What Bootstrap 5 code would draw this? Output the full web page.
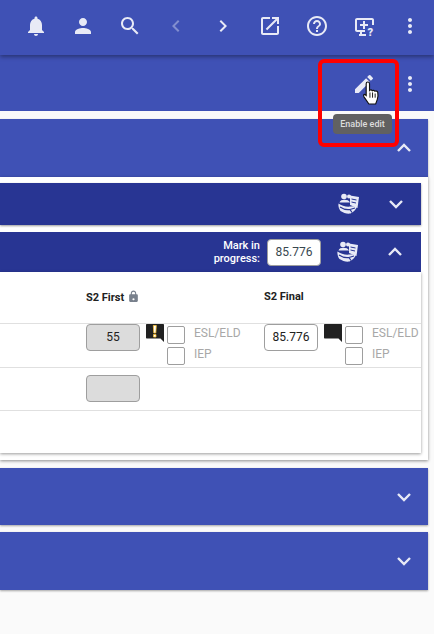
<!DOCTYPE html>
<html lang="en">
<head>
  <meta charset="UTF-8">
  <title>Marks</title>
  <link href="https://cdn.jsdelivr.net/npm/bootstrap@5.3.0/dist/css/bootstrap.min.css" rel="stylesheet">
  <style>
    html, body { height: 634px; overflow: hidden; }
    body { background: #fafafa; font-family: Roboto, "Liberation Sans", sans-serif; font-size: 12px; color: #212121; position: relative; }
    .top-bar { height: 55px; background: #3f51b5; box-shadow: 0 2px 4px rgba(0,0,0,.35); position: relative; z-index: 2; padding: 0 12px 3px 24px; }
    .top-btn { width: 24px; height: 24px; color: #e8eaf6; flex: none; }
    .top-btn svg { display: block; width: 24px; height: 24px; fill: currentColor; }
    .top-btn.off { opacity: .4; }
    .sub-bar { height: 56px; background: #3f51b5; padding: 2px 12px 0 0; }
    .panel-wrap { margin-top: 8px; width: 428px; }
    .panel-head { background: #3f51b5; color: #fff; padding-right: 14px; box-shadow: 0 1px 2px rgba(0,0,0,.35); }
    .chev { width: 20px; height: 20px; fill: none; stroke: #e8eaf6; stroke-width: 2.4; flex: none; }
    .outer-body { background: #fff; padding: 6px 7px 7px 0; box-shadow: 0 1px 3px rgba(0,0,0,.45); }
    .inner-head { background: #283593; color: #fff; height: 42px; padding-right: 15px; box-shadow: 0 1px 2px rgba(0,0,0,.4); }
    .inner-head.open { height: 40px; margin-top: 7px; box-shadow: none; padding-right: 16px; }
    .book-ico { width: 24px; height: 24px; flex: none; margin-right: 25px; }
    .mip-label { font-size: 11px; line-height: 13px; text-align: right; font-weight: 500; margin-right: 7px; }
    .mark-box { width: 54px; height: 27px; border: 1px solid #9e9e9e; border-radius: 4px; background: #fff; color: #37474f; font-size: 12px; text-align: center; line-height: 25px; margin-right: 15px; }
    .marks-card { background: #fff; box-shadow: 0 1px 3px rgba(0,0,0,.4); height: 181px; }
    .marks-row { padding-left: 86px; border-bottom: 1px solid #e0e0e0; }
    .row-head { height: 52px; padding-top: 17px; font-weight: 700; font-size: 11px; color: #212121; }
    .row-one { height: 44px; }
    .row-two { height: 43px; padding-top: 7px; }
    .row-last { height: 43px; border-bottom: 0; }
    .col-first { width: 178px; flex: none; }
    .lock-ico { width: 13px; height: 15px; vertical-align: -3px; }
    .mark-cell { width: 54px; height: 27px; border: 1px solid #9e9e9e; border-radius: 4px; background: #fff; font-size: 12px; line-height: 25px; text-align: center; flex: none; color: #212121; }
    .mark-cell.locked { background: #dcdcdc; }
    .note-ico { width: 20px; height: 20px; flex: none; margin-left: 6px; }
    .tick-box { width: 18px; height: 18px; border: 1px solid #9e9e9e; border-radius: 2px; background: #fff; display: block; flex: none; }
    .tick-col { margin-left: 1px; margin-top: 2px; gap: 3px; }
    .tick-txt { color: #a8a8a8; font-size: 12px; margin-left: 9px; line-height: 21px; margin-top: -1px; }
    .red-frame { position: absolute; left: 318px; top: 59px; width: 81px; height: 88px; border: 4px solid #f00; border-radius: 6px; z-index: 5; }
    .tip-box { position: absolute; left: 333px; top: 114px; width: 59px; height: 20px; background: #616161; color: #ddd; font-size: 9px; font-weight: 500; line-height: 20px; text-align: center; border-radius: 4px; z-index: 4; }
    .pen-ico { position: absolute; left: 352px; top: 72px; width: 24px; height: 24px; z-index: 3; }
    .hand-ico { position: absolute; left: 361px; top: 81px; width: 21px; height: 24px; z-index: 4; }
  </style>
</head>
<body>
  <div class="top-bar d-flex align-items-center justify-content-between">
    <span class="top-btn"><svg viewBox="0 0 24 24"><path d="M12 22c1.100 0 2-.9 2-2h-4c0 1.100.9 2 2 2zm6-6v-5c0-3.070-1.640-5.640-4.500-6.320V4c0-.83-.67-1.500-1.500-1.500s-1.500.67-1.500 1.500v.68C7.630 5.360 6 7.920 6 11v5l-2 2v1h16v-1l-2-2z"/></svg></span>
    <span class="top-btn"><svg viewBox="0 0 24 24"><path d="M12 12c2.210 0 4-1.790 4-4s-1.790-4-4-4-4 1.790-4 4 1.790 4 4 4zm0 2c-2.670 0-8 1.340-8 4v2h16v-2c0-2.660-5.330-4-8-4z"/></svg></span>
    <span class="top-btn"><svg viewBox="0 0 24 24"><path d="M15.500 14h-.79l-.28-.27C15.410 12.590 16 11.110 16 9.500 16 5.910 13.090 3 9.500 3S3 5.910 3 9.500 5.910 16 9.500 16c1.610 0 3.090-.59 4.230-1.570l.27.28v.79l5 4.990L20.490 19l-4.990-5zm-6 0C7.010 14 5 11.990 5 9.500S7.010 5 9.500 5 14 7.010 14 9.500 11.990 14 9.500 14z"/></svg></span>
    <span class="top-btn off"><svg viewBox="0 0 24 24"><path d="M15.410 7.410 14 6l-6 6 6 6 1.410-1.410L10.830 12z"/></svg></span>
    <span class="top-btn"><svg viewBox="0 0 24 24"><path d="M10 6 8.590 7.410 13.170 12l-4.580 4.590L10 18l6-6z"/></svg></span>
    <span class="top-btn"><svg viewBox="0 0 24 24"><path d="M19 19H5V5h7V3H5c-1.110 0-2 .9-2 2v14c0 1.100.89 2 2 2h14c1.100 0 2-.9 2-2v-7h-2v7zM14 3v2h3.590l-9.830 9.830 1.410 1.410L19 6.410V10h2V3h-7z"/></svg></span>
    <span class="top-btn"><svg viewBox="0 0 24 24"><path d="M11 18h2v-2h-2v2zm1-16C6.480 2 2 6.480 2 12s4.480 10 10 10 10-4.480 10-10S17.520 2 12 2zm0 18c-4.410 0-8-3.590-8-8s3.590-8 8-8 8 3.590 8 8-3.590 8-8 8zm0-14c-2.210 0-4 1.790-4 4h2c0-1.100.9-2 2-2s2 .9 2 2c0 2-3 1.750-3 5h2c0-2.250 3-2.500 3-5 0-2.210-1.790-4-4-4z"/></svg></span>
    <span class="top-btn"><svg viewBox="0 0 24 24"><path d="M6 4h15c1 0 2 .8 2 2v5h-2V6H6v10h8v2h-3v2h4v2H8v-2h1v-2H6c-1 0-2-.8-2-2V6c0-1.200 1-2 2-2zm6 3h2v3h3v2h-3v3h-2v-3H9v-2h3z"/><text x="16.500" y="21.500" font-size="11" font-weight="900" font-family="Roboto, sans-serif">?</text></svg></span>
    <span class="top-btn"><svg viewBox="0 0 24 24"><path d="M12 8c1.100 0 2-.9 2-2s-.9-2-2-2-2 .9-2 2 .9 2 2 2zm0 2c-1.100 0-2 .9-2 2s.9 2 2 2 2-.9 2-2-.9-2-2-2zm0 6c-1.100 0-2 .9-2 2s.9 2 2 2 2-.9 2-2-.9-2-2-2z"/></svg></span>
  </div>

  <div class="sub-bar d-flex align-items-center justify-content-end">
    <span class="top-btn"><svg viewBox="0 0 24 24"><path d="M12 8c1.100 0 2-.9 2-2s-.9-2-2-2-2 .9-2 2 .9 2 2 2zm0 2c-1.100 0-2 .9-2 2s.9 2 2 2 2-.9 2-2-.9-2-2-2zm0 6c-1.100 0-2 .9-2 2s.9 2 2 2 2-.9 2-2-.9-2-2-2z"/></svg></span>
  </div>

  <div class="panel-wrap">
    <div class="panel-head d-flex align-items-center justify-content-end" style="height:58px">
      <svg class="chev" viewBox="0 0 20 20"><path d="M4 13l6-6 6 6"/></svg>
    </div>
    <div class="outer-body">
      <div class="inner-head d-flex align-items-center justify-content-end">
        <svg class="book-ico" viewBox="0 0 24 24"><use href="#bookIco"/></svg>
        <svg class="chev" viewBox="0 0 20 20"><path d="M4 7l6 6 6-6"/></svg>
      </div>
      <div class="inner-head open d-flex align-items-center justify-content-end">
        <div class="mip-label">Mark in<br>progress:</div>
        <div class="mark-box">85.776</div>
        <svg class="book-ico" viewBox="0 0 24 24"><use href="#bookIco"/></svg>
        <svg class="chev" viewBox="0 0 20 20"><path d="M4 13l6-6 6 6"/></svg>
      </div>
      <div class="marks-card">
        <div class="marks-row row-head d-flex">
          <div class="col-first">S2 First
            <svg class="lock-ico" viewBox="0 0 24 24" fill="#78808c"><path d="M18 8h-1V6c0-2.760-2.240-5-5-5S7 3.240 7 6v2H6c-1.100 0-2 .9-2 2v10c0 1.100.9 2 2 2h12c1.100 0 2-.9 2-2V10c0-1.100-.9-2-2-2zM9 6c0-1.660 1.340-3 3-3s3 1.340 3 3v2H9V6zm3 9a2 2 0 1 1 0 4 2 2 0 0 1 0-4z"/></svg>
          </div>
          <div>S2 Final</div>
        </div>
        <div class="marks-row row-one d-flex">
          <div class="col-first d-flex">
            <div class="mark-cell locked">55</div>
            <svg class="note-ico" viewBox="0 0 20 20"><path d="M1 0h16c.6 0 1 .4 1 1v17l-3.500-3.500H1c-.6 0-1-.4-1-1V1c0-.6.4-1 1-1z" fill="#212121"/><path d="M7.300 1.500h3l-.5 7.500H7.800zM7.500 10.500h2.500v2.500H7.500z" fill="#fff" stroke="#fbc02d" stroke-width=".8"/></svg>
            <div class="d-flex flex-column tick-col"><span class="tick-box"></span><span class="tick-box"></span></div>
            <div class="tick-txt">ESL/ELD<br>IEP</div>
          </div>
          <div class="d-flex">
            <div class="mark-cell">85.776</div>
            <svg class="note-ico" viewBox="0 0 20 20"><path d="M1 0h16c.6 0 1 .4 1 1v17l-3.500-3.500H1c-.6 0-1-.4-1-1V1c0-.6.4-1 1-1z" fill="#212121"/></svg>
            <div class="d-flex flex-column tick-col"><span class="tick-box"></span><span class="tick-box"></span></div>
            <div class="tick-txt">ESL/ELD<br>IEP</div>
          </div>
        </div>
        <div class="marks-row row-two"><div class="mark-cell locked"></div></div>
        <div class="marks-row row-last"></div>
      </div>
    </div>
    <div class="panel-head d-flex align-items-center justify-content-end" style="height:57px;margin-top:8px">
      <svg class="chev" viewBox="0 0 20 20"><path d="M4 7l6 6 6-6"/></svg>
    </div>
    <div class="panel-head d-flex align-items-center justify-content-end" style="height:58px;margin-top:7px">
      <svg class="chev" viewBox="0 0 20 20"><path d="M4 7l6 6 6-6"/></svg>
    </div>
  </div>

  <svg width="0" height="0" class="position-absolute">
    <symbol id="bookIco" viewBox="0 0 24 24">
      <path d="M13 3.500l9 1.500-1.500 11-7.500-3z" fill="#e8eaf6"/>
      <path d="M14.500 7l5 1M14.500 10l4.500 1" stroke="#283593" stroke-width="1" fill="none"/>
      <circle cx="7" cy="4.500" r="2.800" fill="#e8eaf6"/>
      <circle cx="12" cy="4.500" r="2" fill="#e8eaf6"/>
      <path d="M2.500 10.500C3 8.500 5 7.800 7.500 7.800s4.500.7 5.500 2.700z" fill="#e8eaf6"/>
      <path d="M1.500 11.500c3 2.500 8 3.500 12 3l6.500-.5c-.5 3-3 6-6.500 7.500-3.500.5-7-.5-10-2.500-1.500-2-2.500-5-2-7.500z" fill="#e8eaf6"/>
      <path d="M3 15c3 2 7 3 10 2.500l5-1.500M13 17.500l2 3" fill="none" stroke="#283593" stroke-width="1.200"/>
    </symbol>
  </svg>

  <svg class="pen-ico" viewBox="0 0 24 24"><path d="M3 17.250V21h3.750L17.810 9.940l-3.750-3.750L3 17.250z" fill="#e8eaf6"/><path d="M20.710 7.040a1 1 0 0 0 0-1.410l-2.340-2.340a1 1 0 0 0-1.410 0l-1.830 1.830 3.750 3.750 1.830-1.830z" fill="#e8eaf6"/></svg>
  <svg class="hand-ico" viewBox="0 0 19 23"><path d="M6 1c1 0 1.600.7 1.600 1.700V9c.7-.8 2.100-.7 2.600.3.800-.6 2.100-.4 2.600.5.900-.5 2.200-.1 2.700 1 .4 2 .2 5-.5 7L13.500 22H7l-4.700-6.800c-.8-1.400-.4-2.500 1-2.300l1.100 1V2.700C4.400 1.700 5 1 6 1z" fill="#fff" stroke="#111" stroke-width="1.100"/><path d="M8 11v5M10.500 11v5M13 12v4" stroke="#111" stroke-width=".9"/></svg>
  <div class="tip-box">Enable edit</div>
  <div class="red-frame"></div>

  <script src="https://cdn.jsdelivr.net/npm/bootstrap@5.3.0/dist/js/bootstrap.bundle.min.js"></script>
</body>
</html>
